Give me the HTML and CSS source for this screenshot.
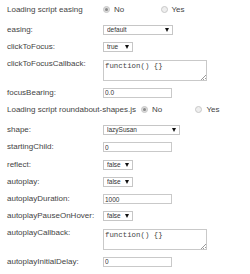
FILE: index.html
```html
<!DOCTYPE html>
<html>
<head>
<meta charset="utf-8">
<link rel="stylesheet" href="styles.css">
</head>
<body>
<div class="form">
  <div class="row radios">
    <span class="label">Loading script easing</span>
    <span class="opt"><span class="radio checked"></span>No</span>
    <span class="opt"><span class="radio"></span>Yes</span>
  </div>
  <div class="row">
    <label class="label">easing:</label>
    <span class="select w70"><select><option>default</option></select></span>
  </div>
  <div class="row">
    <label class="label">clickToFocus:</label>
    <span class="select w30"><select><option>true</option></select></span>
  </div>
  <div class="row tall">
    <label class="label">clickToFocusCallback:</label>
    <span class="area"><textarea>function() {}</textarea></span>
  </div>
  <div class="row">
    <label class="label">focusBearing:</label>
    <input class="text" type="text" value="0.0">
  </div>
  <div class="row radios">
    <span class="label">Loading script roundabout-shapes.js</span>
    <span class="opt"><span class="radio checked"></span>No</span>
    <span class="opt"><span class="radio"></span>Yes</span>
  </div>
  <div class="row">
    <label class="label">shape:</label>
    <span class="select w77"><select><option>lazySusan</option></select></span>
  </div>
  <div class="row">
    <label class="label">startingChild:</label>
    <input class="text" type="text" value="0">
  </div>
  <div class="row">
    <label class="label">reflect:</label>
    <span class="select w30"><select><option>false</option></select></span>
  </div>
  <div class="row">
    <label class="label">autoplay:</label>
    <span class="select w30"><select><option>false</option></select></span>
  </div>
  <div class="row">
    <label class="label">autoplayDuration:</label>
    <input class="text" type="text" value="1000">
  </div>
  <div class="row">
    <label class="label">autoplayPauseOnHover:</label>
    <span class="select w30"><select><option>false</option></select></span>
  </div>
  <div class="row tall">
    <label class="label">autoplayCallback:</label>
    <span class="area"><textarea>function() {}</textarea></span>
  </div>
  <div class="row">
    <label class="label">autoplayInitialDelay:</label>
    <input class="text" type="text" value="0">
  </div>
</div>
</body>
</html>
```
FILE: styles.css
```css
html, body {
  margin: 0;
  padding: 0;
  background: #fff;
}
body {
  font-family: "Liberation Sans", Arial, sans-serif;
  font-size: 8px;
  color: #444;
}
.form {
  padding: 5px 0 0 7px;
  display: flex;
  flex-direction: column;
}
.row {
  display: flex;
  align-items: flex-start;
  height: 10px;
  margin-bottom: 7.25px;
}
.row.tall {
  height: 21px;
}
.row.radios {
  align-items: center;
  margin-bottom: 10px;
}
.label {
  flex: none;
  box-sizing: border-box;
  min-width: 96px;
  padding-right: 5px;
  line-height: 10px;
  white-space: nowrap;
}
.row.tall .label {
  line-height: 8px;
}
.opt {
  display: flex;
  align-items: center;
  width: 57.5px;
  line-height: 10px;
}
.radio {
  box-sizing: border-box;
  width: 7px;
  height: 7px;
  margin: -2px 4px 0 0;
  border-radius: 50%;
  border: 1px solid #c8c8c8;
  background: #eeeeee;
  display: flex;
  align-items: center;
  justify-content: center;
}
.radio.checked {
  background: #dcdcdc;
}
.radio.checked::after {
  content: "";
  width: 3px;
  height: 3px;
  border-radius: 50%;
  background: #8a8a8a;
}
.select {
  position: relative;
  display: block;
  height: 10px;
}
.select select {
  -webkit-appearance: none;
  appearance: none;
  box-sizing: border-box;
  width: 100%;
  height: 10px;
  margin: 0;
  padding: 0 0 0 3px;
  border: 1px solid #c6c6c6;
  border-radius: 0;
  background: #fff;
  font-family: "Liberation Sans", Arial, sans-serif;
  font-size: 6.5px;
  line-height: 8px;
  color: #333;
  outline: none;
}
.select::after {
  content: "";
  position: absolute;
  right: 4px;
  top: 3px;
  border-left: 2.5px solid transparent;
  border-right: 2.5px solid transparent;
  border-top: 4px solid #111;
}
.w70 { width: 70px; }
.w30 { width: 30px; }
.w77 { width: 77px; }
.text {
  box-sizing: border-box;
  width: 69px;
  height: 10px;
  margin: 0;
  padding: 0 1px;
  border: 1px solid #c9c9c9;
  border-radius: 0;
  font-family: "Liberation Sans", Arial, sans-serif;
  font-size: 6.5px;
  color: #333;
  outline: none;
}
.area {
  position: relative;
  display: block;
  width: 104px;
  height: 21px;
}
.area textarea {
  box-sizing: border-box;
  display: block;
  width: 104px;
  height: 21px;
  margin: 0;
  padding: 1px 1px;
  border: 1px solid #c9c9c9;
  border-radius: 0;
  resize: none;
  overflow: hidden;
  font-family: "Liberation Mono", "Courier New", monospace;
  font-size: 7.4px;
  line-height: 9px;
  color: #444;
  outline: none;
}
.area::after {
  content: "";
  position: absolute;
  right: 1px;
  bottom: 1px;
  width: 5px;
  height: 5px;
  background: linear-gradient(135deg, transparent 45%, #9a9a9a 45%, #9a9a9a 55%, transparent 55%, transparent 70%, #9a9a9a 70%, #9a9a9a 80%, transparent 80%);
}
```
